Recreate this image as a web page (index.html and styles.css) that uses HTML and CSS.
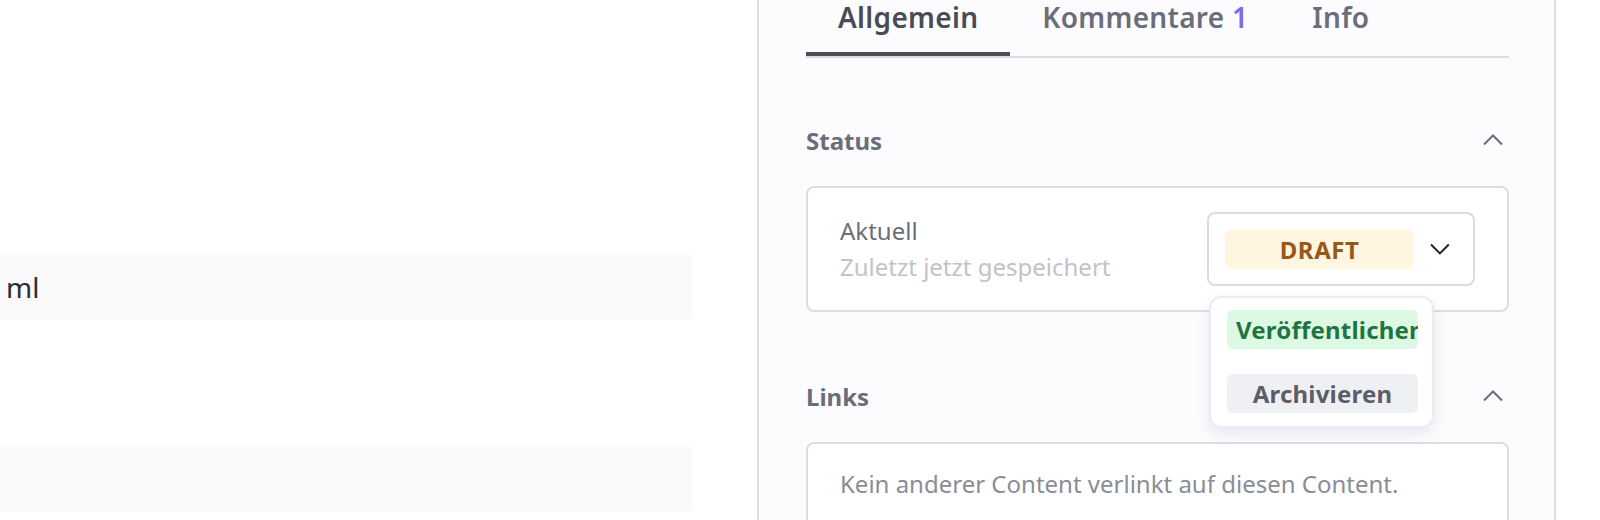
FILE: index.html
```html
<!DOCTYPE html>
<html lang="de">
<head>
<meta charset="utf-8">
<title>Content bearbeiten</title>
<link rel="stylesheet" href="styles.css">
</head>
<body>
<div class="app">
  <main class="main">
    <div class="field-row"><span class="field-text">ml</span></div>
    <div class="field-row second"></div>
  </main>
  <aside class="panel">
    <nav class="tabs">
      <div class="tab active">Allgemein</div>
      <div class="tab">Kommentare <span class="count">1</span></div>
      <div class="tab">Info</div>
    </nav>

    <section class="section">
      <header class="section-head">
        <h3>Status</h3>
        <svg class="chev" width="20" height="12" viewBox="0 0 20 12"><polyline points="1,10.5 10,1.5 19,10.5" fill="none" stroke="#6b6e78" stroke-width="2"/></svg>
      </header>
      <div class="card status-card">
        <div class="status-text">
          <div class="label">Aktuell</div>
          <div class="sub">Zuletzt jetzt gespeichert</div>
        </div>
        <div class="select-wrap">
          <div class="select">
            <span class="badge draft">DRAFT</span>
            <svg class="select-chev" width="20" height="12" viewBox="0 0 20 12"><polyline points="1,1.5 10,10.5 19,1.5" fill="none" stroke="#1f2028" stroke-width="2"/></svg>
          </div>
          <div class="menu">
            <span class="badge publish">Veröffentlichen</span>
            <span class="badge archive">Archivieren</span>
          </div>
        </div>
      </div>
    </section>

    <section class="section">
      <header class="section-head">
        <h3>Links</h3>
        <svg class="chev" width="20" height="12" viewBox="0 0 20 12"><polyline points="1,10.5 10,1.5 19,10.5" fill="none" stroke="#6b6e78" stroke-width="2"/></svg>
      </header>
      <div class="card links-card">
        <p class="empty">Kein anderer Content verlinkt auf diesen Content.</p>
      </div>
    </section>
  </aside>
</div>
</body>
</html>
```

FILE: styles.css
```css
* { box-sizing: border-box; }

html, body {
  margin: 0;
  padding: 0;
  background: #ffffff;
  font-family: "Noto Sans", "Open Sans", sans-serif;
}

.app {
  display: flex;
  width: 1600px;
  height: 520px;
  overflow: hidden;
}

.main {
  flex: 0 0 757px;
  padding-top: 255px;
}

.field-row {
  width: 692px;
  height: 64px;
  background: #fafafc;
  display: flex;
  align-items: center;
  padding-left: 6px;
}

.field-row.second {
  margin-top: 128px;
}

.field-text {
  font-size: 28px;
  color: #2b2c33;
}

.panel {
  flex: 0 0 799px;
  background: #fcfcfe;
  border-left: 2px solid #dcdce0;
  border-right: 2px solid #dcdce0;
  padding: 0 45px 0 47px;
}

.tabs {
  display: flex;
  border-bottom: 2px solid #dcdce0;
}

.tab {
  font-size: 28px;
  line-height: 34px;
  font-weight: 600;
  letter-spacing: 0.3px;
  color: #6b6e7a;
  padding: 0 32px 18px;
  border-bottom: 4px solid transparent;
}

.tab.active {
  color: #4a4b55;
  border-bottom-color: #4d4e59;
}

.count {
  color: #7b6cf6;
}

.section {
  margin-top: 63px;
}

.section + .section {
  margin-top: 65px;
}

.section-head {
  display: flex;
  align-items: center;
  justify-content: space-between;
  height: 38px;
  padding-right: 6px;
}

.section-head h3 {
  margin: 0;
  font-size: 24px;
  font-weight: 700;
  color: #6b6e78;
}

.card {
  margin-top: 27px;
  border: 2px solid #dcdde1;
  border-radius: 8px;
  background: #ffffff;
}

.status-card {
  display: flex;
  align-items: center;
  justify-content: space-between;
  padding: 24px 32px;
}

.status-text {
  font-size: 24px;
  line-height: 36px;
}

.label {
  color: #6b6e78;
}

.sub {
  color: #c2c3c8;
}

.select-wrap {
  position: relative;
}

.select {
  width: 268px;
  height: 74px;
  border: 2px solid #dcdce0;
  border-radius: 8px;
  background: #ffffff;
  display: flex;
  align-items: center;
  padding: 0 23px 0 16px;
  gap: 16px;
}

.badge {
  display: block;
  width: 191px;
  height: 39px;
  line-height: 39px;
  border-radius: 6px;
  font-size: 24px;
  font-weight: 700;
  letter-spacing: 0.2px;
  text-align: center;
  white-space: nowrap;
  overflow: hidden;
  padding: 0 9px;
}

.draft {
  background: #fff6e2;
  color: #995718;
  letter-spacing: 0.6px;
}

.menu {
  position: absolute;
  top: 84px;
  left: 2px;
  width: 225px;
  padding: 12px 16px 13px;
  background: #ffffff;
  border: 2px solid #ebebf6;
  border-radius: 12px;
  box-shadow: 0 6px 14px rgba(60, 60, 110, 0.10);
  display: flex;
  flex-direction: column;
  gap: 25px;
  z-index: 2;
}

.publish {
  background: #dcf9e4;
  color: #1f7440;
}

.archive {
  background: #eff0f3;
  color: #5b5e69;
}

.links-card {
  padding: 22px 32px;
  height: 120px;
}

.empty {
  margin: 0;
  font-size: 24px;
  line-height: 36px;
  color: #8a8d96;
}
```
